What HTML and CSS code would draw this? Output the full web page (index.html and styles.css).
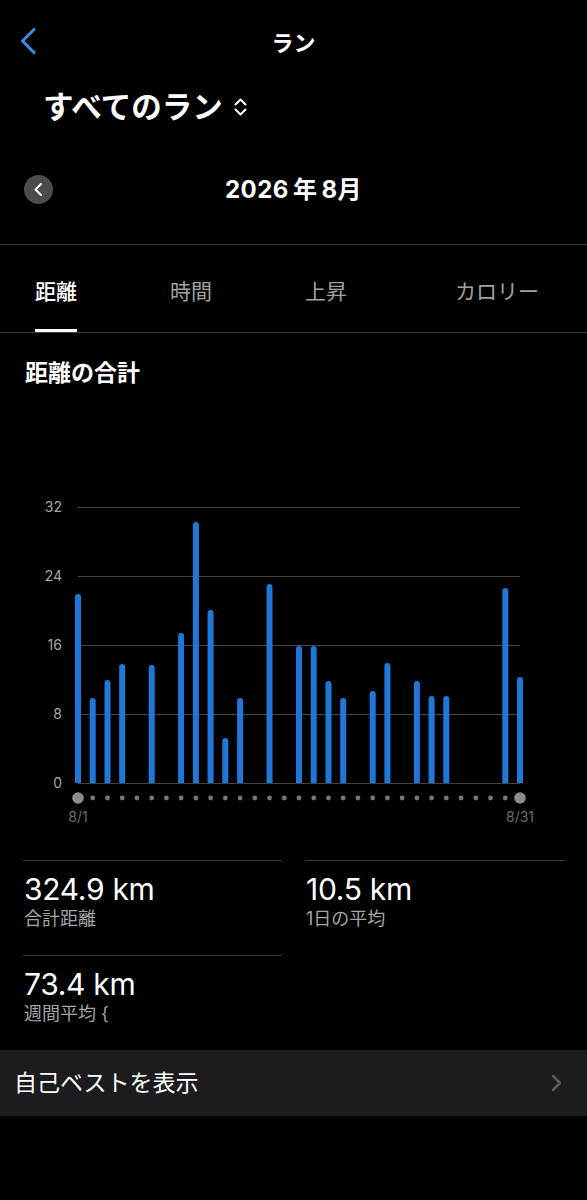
FILE: index.html
```html
<!DOCTYPE html>
<html lang="ja">
<head>
<meta charset="utf-8">
<title>ラン</title>
<link rel="stylesheet" href="styles.css">
</head>
<body>
<div class="screen">
  <header class="nav">
    <div class="nav-left">
      <svg class="back" width="16" height="26" viewBox="0 0 16 26"><path d="M14 1.5 L2.5 13 L14 24.5" fill="none" stroke="#3d8ee2" stroke-width="3" stroke-linecap="round" stroke-linejoin="round"/></svg>
    </div>
    <div class="nav-title">ラン</div>
    <div></div>
  </header>

  <div class="selector">
    <span class="selector-text">すべてのラン</span>
    <svg width="15" height="20" viewBox="0 0 15 20"><path d="M2.5 7.5 L7.5 2.5 L12.5 7.5 M2.5 12.5 L7.5 17.5 L12.5 12.5" fill="none" stroke="#fff" stroke-width="2" stroke-linecap="round" stroke-linejoin="round"/></svg>
  </div>

  <div class="date-row">
    <div class="date-left">
      <svg width="29" height="29" viewBox="0 0 29 29"><circle cx="14.5" cy="14.5" r="14.5" fill="#4b4b4b"/><path d="M17 9 L11.5 14.5 L17 20" fill="none" stroke="#fff" stroke-width="2" stroke-linecap="round" stroke-linejoin="round"/></svg>
    </div>
    <div class="date-title">2026<span class="kanji">年</span>8月</div>
    <div></div>
  </div>

  <nav class="tabs">
    <div class="tab active">距離</div>
    <div class="tab">時間</div>
    <div class="tab">上昇</div>
    <div class="tab tab-last">カロリー</div>
  </nav>

  <h2 class="chart-title">距離の合計</h2>

  <svg class="chart" width="587" height="452" viewBox="0 388 587 452">
    <g stroke="#444" stroke-width="1">
      <line x1="78" y1="507.5" x2="520" y2="507.5"/>
      <line x1="78" y1="576.5" x2="520" y2="576.5"/>
      <line x1="78" y1="645.5" x2="520" y2="645.5"/>
      <line x1="78" y1="714.5" x2="520" y2="714.5"/>
      <line x1="78" y1="783.5" x2="520" y2="783.5"/>
    </g>
    <g class="axis" text-anchor="end">
      <text x="62" y="512">32</text>
      <text x="62" y="581">24</text>
      <text x="62" y="650">16</text>
      <text x="62" y="719">8</text>
      <text x="62" y="788">0</text>
    </g>
    <g fill="#1f78d8">
      <path d="M75 783V597a3 3 0 0 1 6 0V783Z"/>
      <path d="M89.7 783V701a3 3 0 0 1 6 0V783Z"/>
      <path d="M104.5 783V683a3 3 0 0 1 6 0V783Z"/>
      <path d="M119.2 783V667a3 3 0 0 1 6 0V783Z"/>
      <path d="M148.7 783V668a3 3 0 0 1 6 0V783Z"/>
      <path d="M178.1 783V636a3 3 0 0 1 6 0V783Z"/>
      <path d="M192.9 783V525a3 3 0 0 1 6 0V783Z"/>
      <path d="M207.6 783V613a3 3 0 0 1 6 0V783Z"/>
      <path d="M222.3 783V741a3 3 0 0 1 6 0V783Z"/>
      <path d="M237.1 783V701a3 3 0 0 1 6 0V783Z"/>
      <path d="M266.5 783V587a3 3 0 0 1 6 0V783Z"/>
      <path d="M296 783V649a3 3 0 0 1 6 0V783Z"/>
      <path d="M310.7 783V649a3 3 0 0 1 6 0V783Z"/>
      <path d="M325.5 783V684a3 3 0 0 1 6 0V783Z"/>
      <path d="M340.2 783V701a3 3 0 0 1 6 0V783Z"/>
      <path d="M369.7 783V694a3 3 0 0 1 6 0V783Z"/>
      <path d="M384.4 783V666a3 3 0 0 1 6 0V783Z"/>
      <path d="M413.9 783V684a3 3 0 0 1 6 0V783Z"/>
      <path d="M428.6 783V699a3 3 0 0 1 6 0V783Z"/>
      <path d="M443.3 783V699a3 3 0 0 1 6 0V783Z"/>
      <path d="M502.3 783V591a3 3 0 0 1 6 0V783Z"/>
      <path d="M517 783V680a3 3 0 0 1 6 0V783Z"/>
    </g>
    <g fill="#777">
      <circle cx="92.73" cy="798" r="2.4"/><circle cx="107.47" cy="798" r="2.4"/><circle cx="122.2" cy="798" r="2.4"/>
      <circle cx="136.93" cy="798" r="2.4"/><circle cx="151.67" cy="798" r="2.4"/><circle cx="166.4" cy="798" r="2.4"/>
      <circle cx="181.13" cy="798" r="2.4"/><circle cx="195.87" cy="798" r="2.4"/><circle cx="210.6" cy="798" r="2.4"/>
      <circle cx="225.33" cy="798" r="2.4"/><circle cx="240.07" cy="798" r="2.4"/><circle cx="254.8" cy="798" r="2.4"/>
      <circle cx="269.53" cy="798" r="2.4"/><circle cx="284.27" cy="798" r="2.4"/><circle cx="299" cy="798" r="2.4"/>
      <circle cx="313.73" cy="798" r="2.4"/><circle cx="328.47" cy="798" r="2.4"/><circle cx="343.2" cy="798" r="2.4"/>
      <circle cx="357.93" cy="798" r="2.4"/><circle cx="372.67" cy="798" r="2.4"/><circle cx="387.4" cy="798" r="2.4"/>
      <circle cx="402.13" cy="798" r="2.4"/><circle cx="416.87" cy="798" r="2.4"/><circle cx="431.6" cy="798" r="2.4"/>
      <circle cx="446.33" cy="798" r="2.4"/><circle cx="461.07" cy="798" r="2.4"/><circle cx="475.8" cy="798" r="2.4"/>
      <circle cx="490.53" cy="798" r="2.4"/><circle cx="505.27" cy="798" r="2.4"/>
    </g>
    <g fill="#8c8c8c">
      <circle cx="78" cy="798" r="5.8"/>
      <circle cx="520" cy="798" r="5.8"/>
    </g>
    <g class="date-label" text-anchor="middle">
      <text x="78" y="822">8/1</text>
      <text x="520" y="822">8/31</text>
    </g>
  </svg>

  <section class="stats">
    <div class="stat">
      <div class="stat-value">324.9 km</div>
      <div class="stat-label">合計距離</div>
    </div>
    <div class="stat">
      <div class="stat-value">10.5 km</div>
      <div class="stat-label">1日の平均</div>
    </div>
    <div class="stat">
      <div class="stat-value">73.4 km</div>
      <div class="stat-label">週間平均 {</div>
    </div>
  </section>

  <div class="list-row">
    <span class="list-text">自己ベストを表示</span>
    <svg width="11" height="18" viewBox="0 0 11 18"><path d="M2 2 L9 9 L2 16" fill="none" stroke="#5c5c5c" stroke-width="2.5" stroke-linecap="round" stroke-linejoin="round"/></svg>
  </div>
</div>
</body>
</html>
```

FILE: styles.css
```css
* { box-sizing: border-box; }

html, body {
  margin: 0;
  padding: 0;
  background: #000;
}

body {
  font-family: Inter, "Noto Sans CJK JP", sans-serif;
  color: #fff;
}

.screen {
  width: 587px;
  min-height: 1200px;
  background: #000;
}

.nav {
  display: grid;
  grid-template-columns: 1fr auto 1fr;
  align-items: center;
  height: 86px;
}

.nav-left {
  padding-left: 20px;
  display: flex;
  align-items: center;
}

.back {
  display: block;
  margin-top: -5px;
}

.nav-title {
  font-size: 22px;
  font-weight: 700;
  line-height: 30px;
}

.selector {
  display: flex;
  align-items: center;
  gap: 10px;
  height: 42px;
  padding-left: 43px;
}

.selector-text {
  font-size: 30.5px;
  font-weight: 700;
  line-height: 42px;
}

.selector svg { display: block; }

.date-row {
  display: grid;
  grid-template-columns: 1fr auto 1fr;
  align-items: center;
  padding: 47px 0 40px;
  border-bottom: 1px solid #3a3a3a;
}

.date-left {
  padding-left: 24px;
  display: flex;
}

.date-left svg { display: block; }

.date-title {
  font-size: 24px;
  font-weight: 700;
  line-height: 29px;
  letter-spacing: 0.5px;
}

.date-title .kanji {
  margin: 0 4px;
}

.tabs {
  display: flex;
  gap: 93px;
  height: 88px;
  padding-left: 35px;
  border-bottom: 1px solid #3a3a3a;
}

.tab {
  display: flex;
  align-items: center;
  padding-top: 6px;
  border-bottom: 3px solid transparent;
  font-size: 21px;
  color: #a0a0a0;
}

.tab.active {
  color: #fff;
  font-weight: 500;
  border-bottom-color: #fff;
}

.tab-last { margin-left: 15px; }

.chart-title {
  margin: 25px 0 0 25px;
  height: 30px;
  font-size: 23px;
  line-height: 30px;
  font-weight: 700;
}

.chart {
  display: block;
}

.axis text {
  font-family: Inter, sans-serif;
  font-size: 14px;
  fill: #a6a6a6;
}

.date-label text {
  font-family: Inter, sans-serif;
  font-size: 14px;
  fill: #6c6c6c;
}

.stats {
  display: grid;
  grid-template-columns: 259px 260px;
  column-gap: 23px;
  padding: 20px 0 0 23px;
}

.stat {
  border-top: 1px solid #3a3a3a;
  padding: 10px 0 24px 1px;
}

.stat-value {
  font-size: 30px;
  line-height: 36px;
  font-weight: 400;
  letter-spacing: -0.3px;
}

.stat-label {
  font-size: 18px;
  line-height: 24px;
  color: #a4a4a4;
}

.list-row {
  display: flex;
  align-items: center;
  justify-content: space-between;
  height: 66px;
  padding: 0 25px 0 14px;
  background: #1c1c1e;
}

.list-text {
  font-size: 23px;
  line-height: 30px;
}

.list-row svg { display: block; }
```
